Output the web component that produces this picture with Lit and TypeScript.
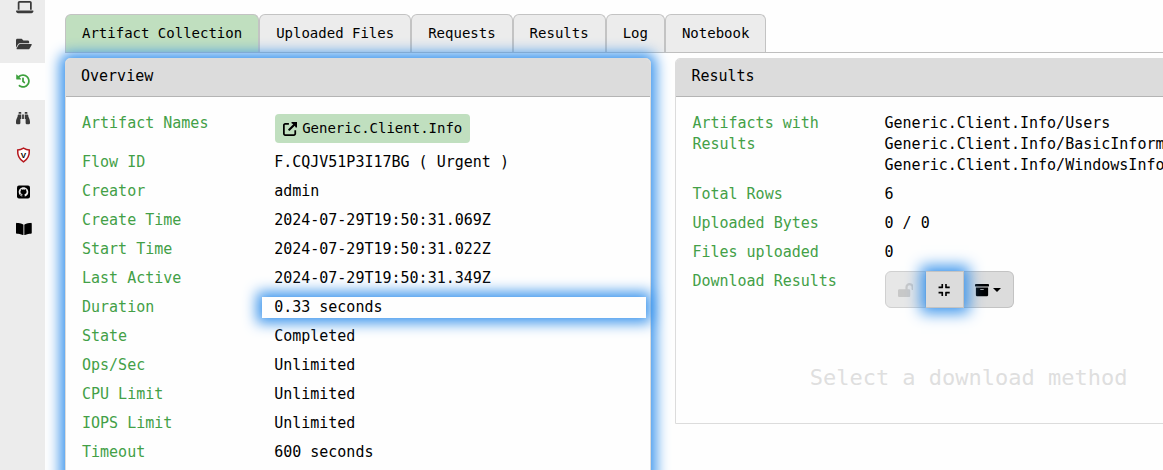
import { LitElement, html, css, svg, nothing } from "lit";
import { customElement, property, state } from "lit/decorators.js";
import { classMap } from "lit/directives/class-map.js";

type Glyph = { w: number; d: string };

const GLYPHS: Record<string, Glyph> = {
  laptop: {
    w: 640,
    d: "M128 32C92.7 32 64 60.7 64 96V352h64V96H512V352h64V96c0-35.3-28.7-64-64-64H128zM19.2 384C8.6 384 0 392.6 0 403.2C0 445.6 34.4 480 76.8 480H563.2c42.4 0 76.8-34.4 76.8-76.8c0-10.6-8.6-19.2-19.2-19.2H19.2z",
  },
  folder: {
    w: 576,
    d: "M572.694 292.093L500.27 416.248A63.997 63.997 0 0 1 444.989 448H45.025c-18.523 0-30.064-20.093-20.731-36.093l72.424-124.155A64 64 0 0 1 152 256h399.964c18.523 0 30.064 20.093 20.73 36.093zM152 224h328v-48c0-26.51-21.49-48-48-48H272l-64-64H48C21.49 64 0 85.49 0 112v278.046l69.077-118.418C86.214 242.25 117.989 224 152 224z",
  },
  history: {
    w: 512,
    d: "M504 255.531c.253 136.64-111.18 248.372-247.82 248.468-59.015.042-113.223-20.53-155.822-54.911-11.077-8.94-11.905-25.541-1.839-35.607l11.267-11.267c8.609-8.609 22.353-9.551 31.891-1.984C173.062 425.135 212.781 440 256 440c101.705 0 184-82.311 184-184 0-101.705-82.311-184-184-184-48.814 0-93.149 18.969-126.068 49.932l50.754 50.754c10.08 10.08 2.941 27.314-11.313 27.314H24c-8.837 0-16-7.163-16-16V38.627c0-14.254 17.234-21.393 27.314-11.314l49.372 49.372C129.209 34.136 189.552 8 256 8c136.81 0 247.747 110.78 248 247.531zm-180.912 78.784l9.823-12.63c8.138-10.463 6.253-25.542-4.21-33.679L288 256.349V152c0-13.255-10.745-24-24-24h-16c-13.255 0-24 10.745-24 24v135.651l65.409 50.874c10.463 8.137 25.541 6.253 33.679-4.21z",
  },
  binoculars: {
    w: 512,
    d: "M416 48c0-8.84-7.16-16-16-16h-64c-8.84 0-16 7.16-16 16v48h96V48zM63.91 159.99C61.4 253.84 3.46 274.22 0 404v44c0 17.67 14.33 32 32 32h96c17.67 0 32-14.33 32-32V288h32V128H95.84c-17.63 0-31.45 14.37-31.93 31.99zm384.18 0c-.48-17.62-14.3-31.99-31.93-31.99H320v160h32v160c0 17.67 14.33 32 32 32h96c17.67 0 32-14.33 32-32v-44c-3.46-129.78-61.4-150.16-63.91-244.01zM176 32h-64c-8.84 0-16 7.16-16 16v48h96V48c0-8.84-7.16-16-16-16zm48 256h64V128h-64v160z",
  },
  book: {
    w: 576,
    d: "M542.22 32.05c-54.8 3.11-163.72 14.43-230.96 55.59-4.64 2.84-7.27 7.89-7.27 13.17v363.87c0 11.55 12.63 18.85 23.28 13.49 69.18-34.82 169.23-44.32 218.7-46.92 16.89-.89 30.02-14.43 30.02-30.66V62.75c.01-17.71-15.35-31.74-33.77-30.7zM264.73 87.64C197.5 46.48 88.58 35.17 33.78 32.05 15.36 31.01 0 45.04 0 62.75V400.6c0 16.24 13.13 29.78 30.02 30.66 49.49 2.6 149.59 12.11 218.77 46.95 10.62 5.35 23.21-1.94 23.21-13.46V100.63c0-5.29-2.62-10.14-7.27-12.99z",
  },
  archive: {
    w: 512,
    d: "M32 448c0 17.7 14.3 32 32 32h384c17.7 0 32-14.3 32-32V160H32v288zm160-212c0-6.6 5.4-12 12-12h104c6.6 0 12 5.4 12 12v8c0 6.6-5.4 12-12 12H204c-6.6 0-12-5.4-12-12v-8zM480 32H32C14.3 32 0 46.3 0 64v48c0 8.8 7.2 16 16 16h480c8.8 0 16-7.2 16-16V64c0-17.7-14.3-32-32-32z",
  },
  unlock: {
    w: 576,
    d: "M423.5 0C339.5.3 272 69.5 272 153.5V224H48c-26.5 0-48 21.5-48 48v192c0 26.5 21.5 48 48 48h352c26.5 0 48-21.5 48-48V272c0-26.5-21.5-48-48-48h-48v-71.1c0-39.6 31.7-72.5 71.3-72.9 40-.4 72.7 32.1 72.7 72v80c0 13.3 10.7 24 24 24h32c13.3 0 24-10.7 24-24v-80C576 68 507.5-.3 423.5 0z",
  },
  compress: {
    w: 448,
    d: "M126 40h60v134q0 16-16 16H20v-58h106zM322 40h-60v134q0 16 16 16h150v-58H322zM126 472h60V338q0-16-16-16H20v58h106zM322 472h-60V338q0-16 16-16h150v58H322z",
  },
  external: {
    w: 512,
    d: "M312 0v48l64 32L192 264q-12 12 0 24l30 30q12 12 24 0L432 136l32 64h48V0zM80 32C35.8 32 0 67.8 0 112V432c0 44.2 35.8 80 80 80H400c44.2 0 80-35.8 80-80V304h-64V432c0 8.8-7.2 16-16 16H80c-8.8 0-16-7.2-16-16V112c0-8.8 7.2-16 16-16H216V32H80z",
  },
};

const OCTOCAT =
  "M8 0C3.58 0 0 3.58 0 8c0 3.54 2.29 6.53 5.47 7.59.4.07.55-.17.55-.38 0-.19-.01-.82-.01-1.49-2.01.37-2.53-.49-2.69-.94-.09-.23-.48-.94-.82-1.13-.28-.15-.68-.52-.01-.53.63-.01 1.08.58 1.23.82.72 1.21 1.87.87 2.33.66.07-.52.28-.87.51-1.07-1.78-.2-3.64-.89-3.64-3.95 0-.87.31-1.59.82-2.15-.08-.2-.36-1.02.08-2.12 0 0 .67-.21 2.2.82.64-.18 1.32-.27 2-.27.68 0 1.36.09 2 .27 1.53-1.04 2.2-.82 2.2-.82.44 1.1.16 1.92.08 2.12.51.56.82 1.27.82 2.15 0 3.07-1.87 3.75-3.65 3.95.29.25.54.73.54 1.48 0 1.07-.01 1.93-.01 2.2 0 .21.15.46.55.38A8.013 8.013 0 0 0 16 8c0-4.42-3.58-8-8-8z";

@customElement("ui-icon")
class UiIcon extends LitElement {
  static styles = css`
    :host {
      display: inline-flex;
      flex: none;
    }
    .glyph {
      display: block;
      height: 14px;
      fill: currentColor;
    }
    .shield {
      height: 16px;
    }
    .vee {
      font: bold 8px "Liberation Sans", sans-serif;
      fill: #000;
    }
  `;
  @property() name = "";

  render() {
    if (this.name === "shield") {
      return html`<svg class="glyph shield" viewBox="0 0 15 16" aria-hidden="true">
        ${svg`<path d="M7.500 1.200 Q10.500 3 13.300 3 Q13.800 11 7.500 14.800 Q1.200 11 1.700 3 Q4.500 3 7.500 1.200z" fill="#fff" stroke="#b5161c" stroke-width="1.500"></path>
        <text class="vee" x="7.500" y="11" text-anchor="middle">V</text>`}
      </svg>`;
    }
    if (this.name === "github") {
      return html`<svg class="glyph" viewBox="0 0 15 14" aria-hidden="true">
        ${svg`<rect x="1" y="0.500" width="13" height="13" rx="2"></rect>
        <path d=${OCTOCAT} fill="#ececec" transform="translate(2.700 2.200) scale(0.600)"></path>`}
      </svg>`;
    }
    const g = GLYPHS[this.name];
    return g
      ? html`<svg class="glyph" viewBox="0 0 ${g.w} 512" aria-hidden="true">${svg`<path d=${g.d}></path>`}</svg>`
      : nothing;
  }
}

@customElement("app-root")
class AppRoot extends LitElement {
  static styles = css`
    :host {
      display: block;
      height: 100vh;
      overflow: hidden;
      background: #fefefe;
      color: #000;
      font: 15px/21px "DejaVu Sans Mono", monospace;
    }
    * {
      box-sizing: border-box;
    }
    .shell {
      display: flex;
      height: 100%;
    }
    .side {
      flex: none;
      width: 45px;
      background: #ececec;
      overflow: hidden;
    }
    /* the rail is scrolled a little way down */
    .links {
      margin: -11px 0 0;
      padding: 0;
      list-style: none;
    }
    .link {
      display: flex;
      align-items: center;
      height: 37px;
      padding: 0 0 1px 16px;
      color: #3a3a3a;
    }
    .link.dark {
      color: #000;
    }
    .link.on {
      background: #fefefe;
      color: #3ea13e;
    }
    .main {
      flex: 1;
      min-width: 0;
      overflow: hidden;
      padding: 14px 0 0 20px;
    }
    .tabs {
      display: flex;
      border-bottom: 1px solid #bfbfbf;
      margin-bottom: 5px;
    }
    .tab {
      font: 14px/21px "DejaVu Sans Mono", monospace;
      color: #000;
      height: 38px;
      padding: 0 16px;
      background: #ececec;
      border: 1px solid #c3c3c3;
      border-bottom: 0;
      border-radius: 6px 6px 0 0;
    }
    .tab.on {
      background: #c0dfbf;
    }
    .deck {
      display: grid;
      grid-template-columns: 1fr 1fr;
      align-items: start;
      gap: 24px;
      width: 109%;
    }
    .card {
      border: 1px solid #dcdcdc;
      border-radius: 5px 5px 0 0;
      background: #fefefe;
    }
    .glow {
      position: relative;
      box-shadow: 0 0 14px 5px #3a94ec;
    }
    .head {
      margin: 0;
      padding: 7px 15px 9px;
      background: #dcdcdc;
      border-bottom: 1px solid #b4b4b4;
      border-radius: 4px 4px 0 0;
      font-size: 15px;
      font-weight: 400;
    }
    .facts {
      display: grid;
      grid-template-columns: 1fr 2fr;
      row-gap: 8px;
      margin: 0;
      padding: 16px 4px;
    }
    .name {
      padding: 0 12px;
      color: #43a047;
    }
    .value {
      margin: 0;
      padding: 0 12px;
      background: #fefefe;
    }
    .badge {
      display: flex;
      width: max-content;
      align-items: center;
      gap: 5px;
      height: 29px;
      margin: 1px;
      padding: 0 8px;
      border: 0;
      border-radius: 4px;
      background: #c0dfbf;
      color: #000;
      font: 14px/21px "DejaVu Sans Mono", monospace;
    }
    .group {
      display: flex;
    }
    .btn {
      display: flex;
      align-items: center;
      gap: 4px;
      height: 37px;
      padding: 0 12px;
      border: 1px solid #c3c3c3;
      background: #dcdcdc;
      color: #000;
    }
    .btn + .btn {
      border-left: 0;
    }
    .btn:first-child {
      border-radius: 6px 0 0 6px;
    }
    .btn:last-child {
      border-radius: 0 6px 6px 0;
      padding: 0 12px 0 11px;
    }
    .btn:disabled {
      background: #e7e7e7;
      border-color: #d0d0d0;
      color: #c8c8c8;
    }
    .caret {
      border: 4px solid transparent;
      border-top-color: #000;
      border-bottom: 0;
    }
    .hint {
      margin: 0;
      padding: 39px 16px 30px;
      text-align: center;
      font-size: 22px;
      line-height: 30px;
      color: #dfdfdf;
    }
  `;

  @state() private tab = "Artifact Collection";

  private links = [
    ["laptop", "Host"],
    ["folder", "Files"],
    ["history", "Collected"],
    ["binoculars", "Hunts"],
    ["shield", "Home"],
    ["github", "Source"],
    ["book", "Docs"],
  ];
  private tabs = ["Artifact Collection", "Uploaded Files", "Requests", "Results", "Log", "Notebook"];
  private facts = [
    ["Flow ID", "F.CQJV51P3I17BG ( Urgent )"],
    ["Creator", "admin"],
    ["Create Time", "2024-07-29T19:50:31.069Z"],
    ["Start Time", "2024-07-29T19:50:31.022Z"],
    ["Last Active", "2024-07-29T19:50:31.349Z"],
    ["Duration", "0.33 seconds"],
    ["State", "Completed"],
    ["Ops/Sec", "Unlimited"],
    ["CPU Limit", "Unlimited"],
    ["IOPS Limit", "Unlimited"],
    ["Timeout", "600 seconds"],
  ];
  private totals = [
    ["Total Rows", "6"],
    ["Uploaded Bytes", "0 / 0"],
    ["Files uploaded", "0"],
  ];

  private fact([name, value]: string[]) {
    return html`<dt class="name">${name}</dt>
      <dd class=${classMap({ value: true, glow: name === "Duration" })}>${value}</dd>`;
  }

  render() {
    return html`<div class="shell">
      <nav class="side">
        <ul class="links">
          ${this.links.map(
            ([icon, label], i) => html`<li>
              <a class=${classMap({ link: true, on: i === 2, dark: i > 4 })} href="#${icon}" aria-label=${label}
                ><ui-icon name=${icon}></ui-icon
              ></a>
            </li>`
          )}
        </ul>
      </nav>
      <main class="main">
        <div class="tabs" role="tablist">
          ${this.tabs.map(
            (t) => html`<button
              class=${classMap({ tab: true, on: t === this.tab })}
              role="tab"
              aria-selected=${t === this.tab}
              @click=${() => (this.tab = t)}
            >${t}</button>`
          )}
        </div>
        <div class="deck">
          <section class="card glow">
            <h2 class="head">Overview</h2>
            <dl class="facts">
              <dt class="name">Artifact Names</dt>
              <dd class="value">
                <button class="badge"><ui-icon name="external"></ui-icon>Generic.Client.Info</button>
              </dd>
              ${this.facts.map((f) => this.fact(f))}
            </dl>
          </section>
          <section class="card">
            <h2 class="head">Results</h2>
            <dl class="facts">
              <dt class="name">Artifacts with Results</dt>
              <dd class="value">
                <div>Generic.Client.Info/Users</div>
                <div>Generic.Client.Info/BasicInformation</div>
                <div>Generic.Client.Info/WindowsInfo</div>
              </dd>
              ${this.totals.map((f) => this.fact(f))}
              <dt class="name">Download Results</dt>
              <dd class="value">
                <div class="group">
                  <button class="btn" disabled aria-label="Password"><ui-icon name="unlock"></ui-icon></button>
                  <button class="btn glow" aria-label="Prepare"><ui-icon name="compress"></ui-icon></button>
                  <button class="btn" aria-label="Archive">
                    <ui-icon name="archive"></ui-icon><span class="caret"></span>
                  </button>
                </div>
              </dd>
            </dl>
            <p class="hint">Select a download method</p>
          </section>
        </div>
      </main>
    </div>`;
  }
}
